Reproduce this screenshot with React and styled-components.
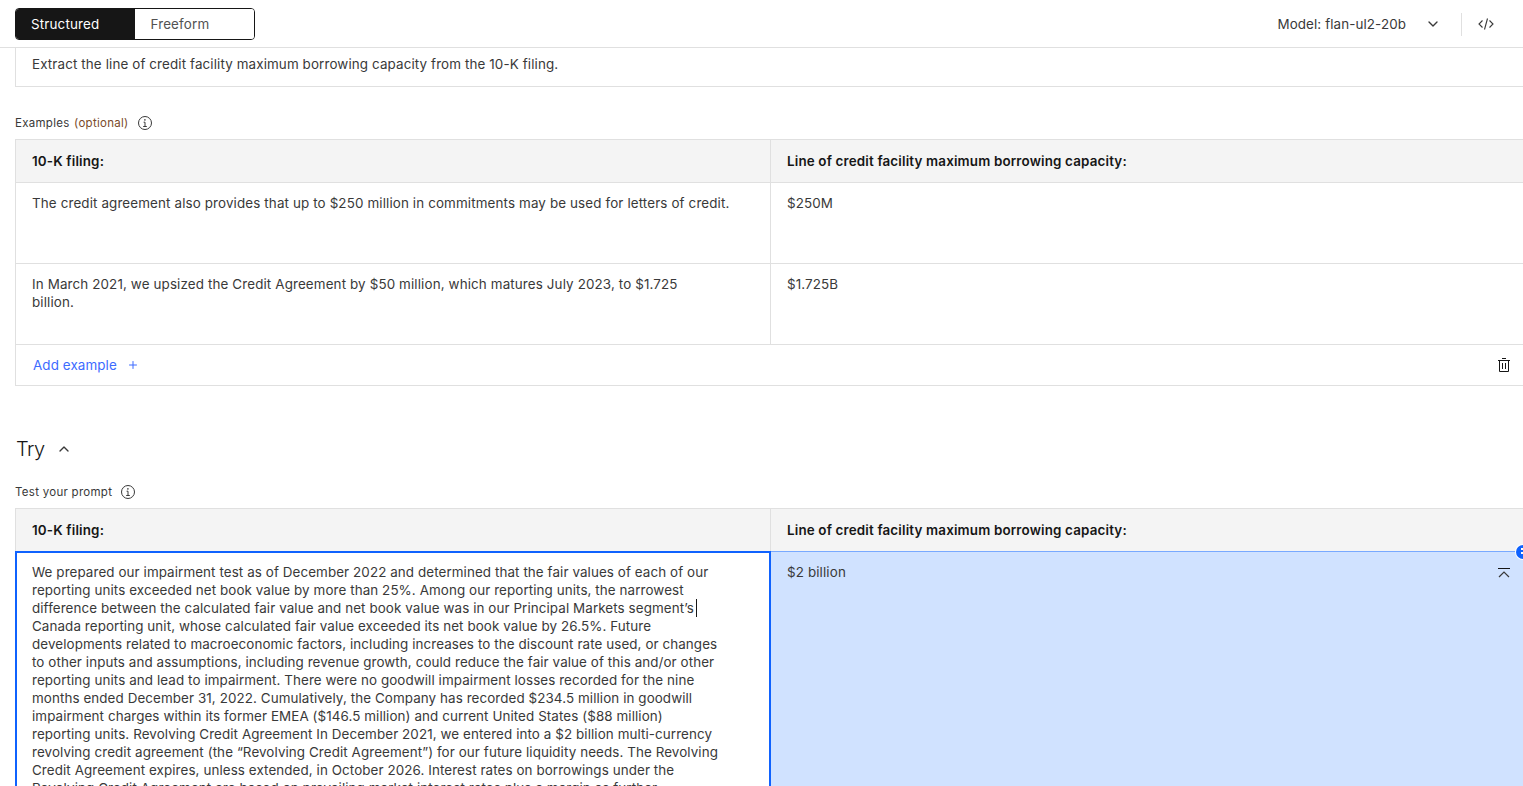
import styled, { createGlobalStyle } from "styled-components";
import { ChevronDown, ChevronUp, Plus } from "lucide-react";

const GlobalStyle = createGlobalStyle`
    html, body {
        margin: 0;
        background: #fff;
        overflow: hidden;
    }
    * {
        box-sizing: border-box;
    }
`

const passage = [
    "We prepared our impairment test as of December 2022 and determined that the fair values of each of our",
    "reporting units exceeded net book value by more than 25%. Among our reporting units, the narrowest",
    "difference between the calculated fair value and net book value was in our Principal Markets segment’s",
    "Canada reporting unit, whose calculated fair value exceeded its net book value by 26.5%. Future",
    "developments related to macroeconomic factors, including increases to the discount rate used, or changes",
    "to other inputs and assumptions, including revenue growth, could reduce the fair value of this and/or other",
    "reporting units and lead to impairment. There were no goodwill impairment losses recorded for the nine",
    "months ended December 31, 2022. Cumulatively, the Company has recorded $234.5 million in goodwill",
    "impairment charges within its former EMEA ($146.5 million) and current United States ($88 million)",
    "reporting units. Revolving Credit Agreement In December 2021, we entered into a $2 billion multi-currency",
    "revolving credit agreement (the “Revolving Credit Agreement”) for our future liquidity needs. The Revolving",
    "Credit Agreement expires, unless extended, in October 2026. Interest rates on borrowings under the",
    "Revolving Credit Agreement are based on prevailing market interest rates plus a margin as further",
];

const InfoIcon = () => (
    <svg width="16" height="16" viewBox="0 0 16 16" fill="none" stroke="#393939">
        <circle cx="8" cy="8" r="6.5" />
        <path d="M6.2 11.5h3.6M8 11.5V7.2H6.6" />
        <circle cx="7.9" cy="4.9" r="0.8" fill="#393939" stroke="none" />
    </svg>
);

const TrashIcon = () => (
    <svg width="16" height="16" viewBox="0 0 16 16" fill="none" stroke="#161616">
        <path d="M6 1.5h4M2 3.5h12M3.5 3.5v11h9v-11M6.5 6v6M9.5 6v6" />
    </svg>
);

const CollapseIcon = () => (
    <svg width="16" height="16" viewBox="0 0 16 16" fill="none" stroke="#161616">
        <path d="M2 3.5h12" />
        <path d="M3 12l5-5 5 5" stroke="#393939" strokeWidth="1.2" />
    </svg>
);

const CodeIcon = () => (
    <svg width="16" height="16" viewBox="0 0 16 16" fill="none" stroke="#393939" strokeWidth="1.1">
        <path d="M4.5 4.5L1 8l3.5 3.5M11.5 4.5L15 8l-3.5 3.5M9.5 2.5l-3 11" />
    </svg>
);

const App = () => {
    return (
        <Page>
            <GlobalStyle />
            <Header>
                <Switcher>
                    <SwitchOption $active>Structured</SwitchOption>
                    <SwitchOption>Freeform</SwitchOption>
                </Switcher>
                <HeaderRight>
                    <ModelName>Model: flan-ul2-20b</ModelName>
                    <ChevronDown size={16} color="#393939" />
                    <Divider />
                    <CodeIcon />
                </HeaderRight>
            </Header>

            <Content>
                <Instruction>
                    Extract the line of credit facility maximum borrowing capacity from the 10-K filing.
                </Instruction>

                <FieldLabel $top="28px">
                    <span>Examples <Optional>(optional)</Optional></span>
                    <InfoIcon />
                </FieldLabel>

                <Table>
                    <Row>
                        <HeadCell>10-K filing:</HeadCell>
                        <HeadCell>Line of credit facility maximum borrowing capacity:</HeadCell>
                    </Row>
                    <Row>
                        <BodyCell>
                            The credit agreement also provides that up to $250 million in commitments may be used for letters of credit.
                        </BodyCell>
                        <BodyCell>$250M</BodyCell>
                    </Row>
                    <Row>
                        <BodyCell>
                            In March 2021, we upsized the Credit Agreement by $50 million, which matures July 2023, to $1.725<br />billion.
                        </BodyCell>
                        <BodyCell>$1.725B</BodyCell>
                    </Row>
                    <AddRow>
                        <AddExample>
                            Add example
                            <Plus size={12} />
                        </AddExample>
                        <TrashIcon />
                    </AddRow>
                </Table>

                <SectionTitle>
                    Try
                    <ChevronUp size={16} color="#393939" />
                </SectionTitle>

                <FieldLabel $top="21px">
                    Test your prompt
                    <InfoIcon />
                </FieldLabel>

                <Table>
                    <Row>
                        <HeadCell>10-K filing:</HeadCell>
                        <HeadCell>Line of credit facility maximum borrowing capacity:</HeadCell>
                    </Row>
                    <TestRow>
                        <InputCell>
                            {passage.map((line, i) => (
                                <PassageLine key={i} $caret={i === 2}>{line}</PassageLine>
                            ))}
                        </InputCell>
                        <OutputCell>
                            $2 billion
                            <CollapseSlot>
                                <CollapseIcon />
                            </CollapseSlot>
                            <Handle />
                        </OutputCell>
                    </TestRow>
                </Table>
            </Content>
        </Page>
    )
}

const Page = styled.div`
    width: 1523px;
    height: 786px;
    overflow: hidden;
    font-family: Inter, "Noto Sans", sans-serif;
    font-size: 14px;
    color: #393939;
`
const Header = styled.header`
    height: 48px;
    padding: 8px 29px 0 15px;
    display: flex;
    justify-content: space-between;
    align-items: flex-start;
    border-bottom: 1px solid #e0e0e0;
`
const Switcher = styled.div`
    width: 240px;
    height: 32px;
    display: flex;
    border: 1px solid #161616;
    border-radius: 4px;
    overflow: hidden;
`
const SwitchOption = styled.div`
    width: ${(p) => (p.$active ? "119px" : "120px")};
    padding-left: ${(p) => (p.$active ? "15px" : "16px")};
    line-height: 30px;
    font-size: 13.4px;
    letter-spacing: 0.16px;
    background: ${(p) => (p.$active ? "#161616" : "#fff")};
    color: ${(p) => (p.$active ? "#fff" : "#525252")};
`
const HeaderRight = styled.div`
    height: 32px;
    display: flex;
    align-items: center;
`
const ModelName = styled.span`
    font-size: 13.4px;
    letter-spacing: 0.1px;
    margin-right: 19px;
`
const Divider = styled.div`
    width: 1px;
    height: 23px;
    background: #e0e0e0;
    margin: 0 16px 0 20px;
`
const Content = styled.main`
    padding-left: 15px;
`
const Instruction = styled.div`
    height: 39px;
    padding: 7px 16px 0;
    line-height: 18px;
    font-size: 13.4px;
    letter-spacing: 0.12px;
    border-left: 1px solid #e0e0e0;
    border-bottom: 1px solid #e0e0e0;
`
const FieldLabel = styled.div`
    height: 16px;
    margin: ${(p) => p.$top} 0 8px;
    display: flex;
    align-items: center;
    gap: 8px;
    font-size: 11.5px;
    letter-spacing: 0.28px;
    line-height: 16px;
    color: #393939;
`
const Optional = styled.span`
    margin-left: 1px;
    color: #7a4a2a;
`
const Table = styled.div`
    border-top: 1px solid #e0e0e0;
`
const Row = styled.div`
    display: grid;
    grid-template-columns: 755px 1fr;
`
const HeadCell = styled.div`
    height: 43px;
    padding: 0 16px;
    line-height: 43px;
    font-size: 13.4px;
    font-weight: 600;
    letter-spacing: 0.16px;
    color: #161616;
    background: #f4f4f4;
    border-left: 1px solid #e0e0e0;
    border-bottom: 1px solid #e0e0e0;
`
const BodyCell = styled.div`
    height: 81px;
    padding: 11px 16px 0;
    line-height: 18px;
    font-size: 13.4px;
    letter-spacing: 0.13px;
    border-left: 1px solid #e0e0e0;
    border-bottom: 1px solid #e0e0e0;
`
const AddRow = styled.div`
    height: 41px;
    padding: 0 11px 0 17px;
    display: flex;
    align-items: center;
    justify-content: space-between;
    border-left: 1px solid #e0e0e0;
    border-bottom: 1px solid #e0e0e0;
`
const AddExample = styled.div`
    display: flex;
    align-items: center;
    gap: 10px;
    font-size: 13.4px;
    letter-spacing: 0.1px;
    color: #3d6bff;
`
const SectionTitle = styled.h2`
    height: 28px;
    margin: 49px 0 0;
    padding-left: 1px;
    display: flex;
    align-items: center;
    gap: 12px;
    font-size: 20px;
    font-weight: 300;
    letter-spacing: -0.6px;
    color: #161616;
`
const TestRow = styled(Row)`
    height: 300px;
    grid-template-columns: 756px 1fr;
`
const InputCell = styled.div`
    padding: 10px 14px 0 15px;
    margin-top: -1px;
    line-height: 18px;
    font-size: 13.4px;
    letter-spacing: 0.09px;
    white-space: nowrap;
    border: 2px solid #0f62fe;
    border-bottom: none;
    background: #fff;
`
const PassageLine = styled.div`
    width: fit-content;
    padding-right: 2px;
    border-right: ${(p) => (p.$caret ? "1px solid #161616" : "none")};
`
const OutputCell = styled.div`
    position: relative;
    padding: 11px 16px 0;
    line-height: 18px;
    font-size: 13.4px;
    letter-spacing: 0.13px;
    background: #d0e2ff;
    border-top: 1px solid #78a9ff;
    margin-top: -1px;
`
const CollapseSlot = styled.div`
    position: absolute;
    top: 13px;
    right: 11px;
    height: 16px;
`
const Handle = styled.div`
    position: absolute;
    top: -7px;
    right: -7px;
    width: 14px;
    height: 14px;
    border-radius: 50%;
    background: #0f62fe;
    box-shadow: 0 0 0 1px #fff;

    &::after {
        content: "";
        position: absolute;
        top: 3px;
        left: 5px;
        width: 2px;
        height: 2px;
        background: #fff;
        box-shadow: 0 4px 0 #fff;
    }
`

export default App;
